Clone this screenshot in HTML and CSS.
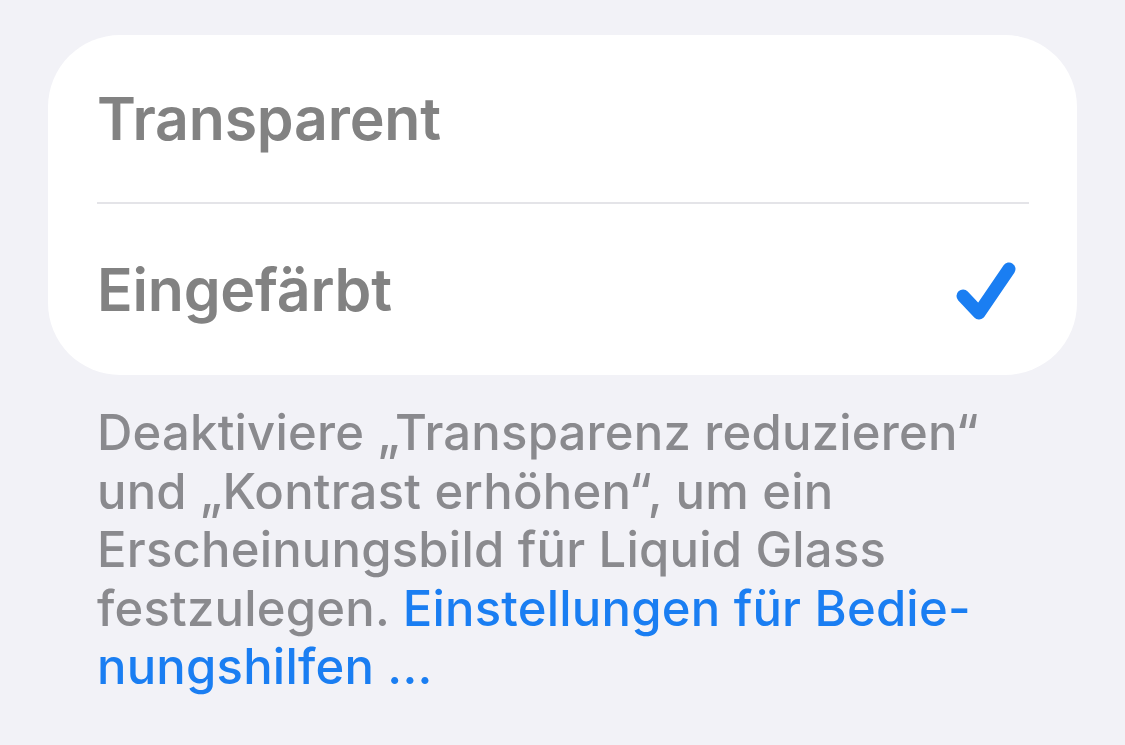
FILE: index.html
```html
<!DOCTYPE html>
<html lang="de">
<head>
    <meta charset="UTF-8">
    <meta name="viewport" content="width=device-width, initial-scale=1.0">
    <title>Liquid Glass</title>
    <link rel="stylesheet" href="styles.css">
</head>
<body>

<div class="page">
    <div class="card">
        <div class="row">
            <span class="row-label">Transparent</span>
        </div>
        <div class="row">
            <span class="row-label">Eingefärbt</span>
            <svg class="check" width="62" height="62" viewBox="0 0 62 62">
                <path d="M8 35 L24 52 L54 8" fill="none" stroke="#1a7ef2" stroke-width="13" stroke-linecap="round" stroke-linejoin="round"/>
            </svg>
        </div>
    </div>

    <p class="footer">
        Deaktiviere „Transparenz reduzieren“<br>
        und „Kontrast erhöhen“, um ein<br>
        Erscheinungsbild für Liquid Glass<br>
        festzulegen. <a href="#" class="link">Einstellungen für Bedie-<br>nungshilfen ...</a>
    </p>
</div>

</body>
</html>
```

FILE: styles.css
```css
body {
    margin: 0;
    background-color: #f2f2f7;
    font-family: Inter, "Noto Sans", sans-serif;
}

.page {
    padding: 35px 48px 0 48px;
}

.card {
    background-color: #fff;
    border-radius: 72px;
    padding: 0 48px 0 49px;
}

.row {
    height: 167px;
    display: flex;
    align-items: center;
    justify-content: space-between;
}

.row + .row {
    height: 171px;
    border-top: 2px solid #e4e4e8;
}

.row-label {
    font-size: 59px;
    font-weight: 600;
    color: #828282;
    letter-spacing: -0.2px;
}

.check {
    margin-right: 12px;
    margin-top: 4px;
}

.footer {
    margin: 29px 0 0 49px;
    font-size: 49px;
    line-height: 58.5px;
    font-weight: 500;
    letter-spacing: 0.2px;
    color: #8a8a8e;
}

.link {
    color: #1a7ef2;
    text-decoration: none;
}
```
